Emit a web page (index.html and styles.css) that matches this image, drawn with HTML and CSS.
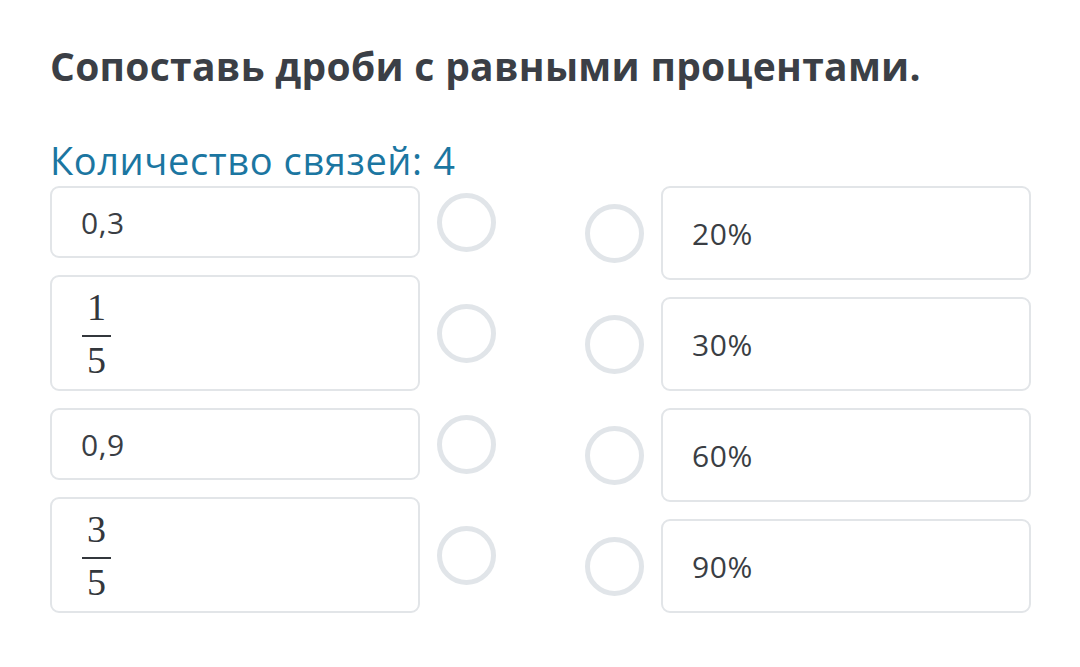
FILE: index.html
```html
<!DOCTYPE html>
<html lang="ru">
<head>
  <meta charset="UTF-8" />
  <meta name="viewport" content="width=device-width, initial-scale=1.0"/>
  <title>Сопоставь дроби с равными процентами</title>
  <link rel="stylesheet" href="styles.css">
</head>
<body>

  <div class="task">
    <h1>Сопоставь дроби с равными процентами.</h1>
    <p class="links-count">Количество связей: 4</p>

    <div class="match">
      <div class="column">
        <div class="row">
          <div class="card short">0,3</div>
          <span class="dot"></span>
        </div>
        <div class="row">
          <div class="card tall">
            <span class="frac"><span class="num">1</span><span class="den">5</span></span>
          </div>
          <span class="dot"></span>
        </div>
        <div class="row">
          <div class="card short">0,9</div>
          <span class="dot"></span>
        </div>
        <div class="row">
          <div class="card tall">
            <span class="frac"><span class="num">3</span><span class="den">5</span></span>
          </div>
          <span class="dot"></span>
        </div>
      </div>

      <div class="column">
        <div class="row">
          <span class="dot"></span>
          <div class="card mid">20%</div>
        </div>
        <div class="row">
          <span class="dot"></span>
          <div class="card mid">30%</div>
        </div>
        <div class="row">
          <span class="dot"></span>
          <div class="card mid">60%</div>
        </div>
        <div class="row">
          <span class="dot"></span>
          <div class="card mid">90%</div>
        </div>
      </div>
    </div>
  </div>

</body>
</html>
```

FILE: styles.css
```css
body {
  margin: 0;
  background: #fff;
  font-family: "Open Sans", Arial, sans-serif;
  color: #3a3e44;
}
.task {
  padding: 38px 50px 0 50px;
}
h1 {
  margin: 0;
  font-size: 39px;
  line-height: 56px;
  font-weight: 700;
  letter-spacing: 0.3px;
  color: #3b3f46;
}
.links-count {
  margin: 42px 0 0 0;
  font-size: 38px;
  line-height: 48px;
  letter-spacing: 0.6px;
  color: #1b76a1;
}
.match {
  display: flex;
  gap: 89px;
  margin-top: 2px;
}
.column {
  display: flex;
  flex-direction: column;
  gap: 17px;
}
.row {
  display: flex;
  align-items: center;
  gap: 17px;
}
.card {
  box-sizing: border-box;
  width: 370px;
  display: flex;
  align-items: center;
  padding-left: 29px;
  border: 2px solid #e2e5e8;
  border-radius: 9px;
  font-size: 30px;
  letter-spacing: 0.6px;
  color: #3a3e44;
}
.short {
  height: 72px;
}
.tall {
  height: 116px;
  padding-left: 30px;
}
.mid {
  height: 94px;
}
.dot {
  box-sizing: border-box;
  width: 59px;
  height: 59px;
  border: 5px solid #e1e5e9;
  border-radius: 50%;
}
.frac {
  display: inline-flex;
  flex-direction: column;
  align-items: center;
  font-family: "Liberation Serif", "DejaVu Serif", serif;
  font-size: 38px;
  line-height: 34px;
  letter-spacing: 0;
  color: #33373c;
}
.num {
  padding: 0 5px 11px 5px;
  border-bottom: 2px solid #33373c;
}
.den {
  padding: 6px 5px 0 5px;
}
```
